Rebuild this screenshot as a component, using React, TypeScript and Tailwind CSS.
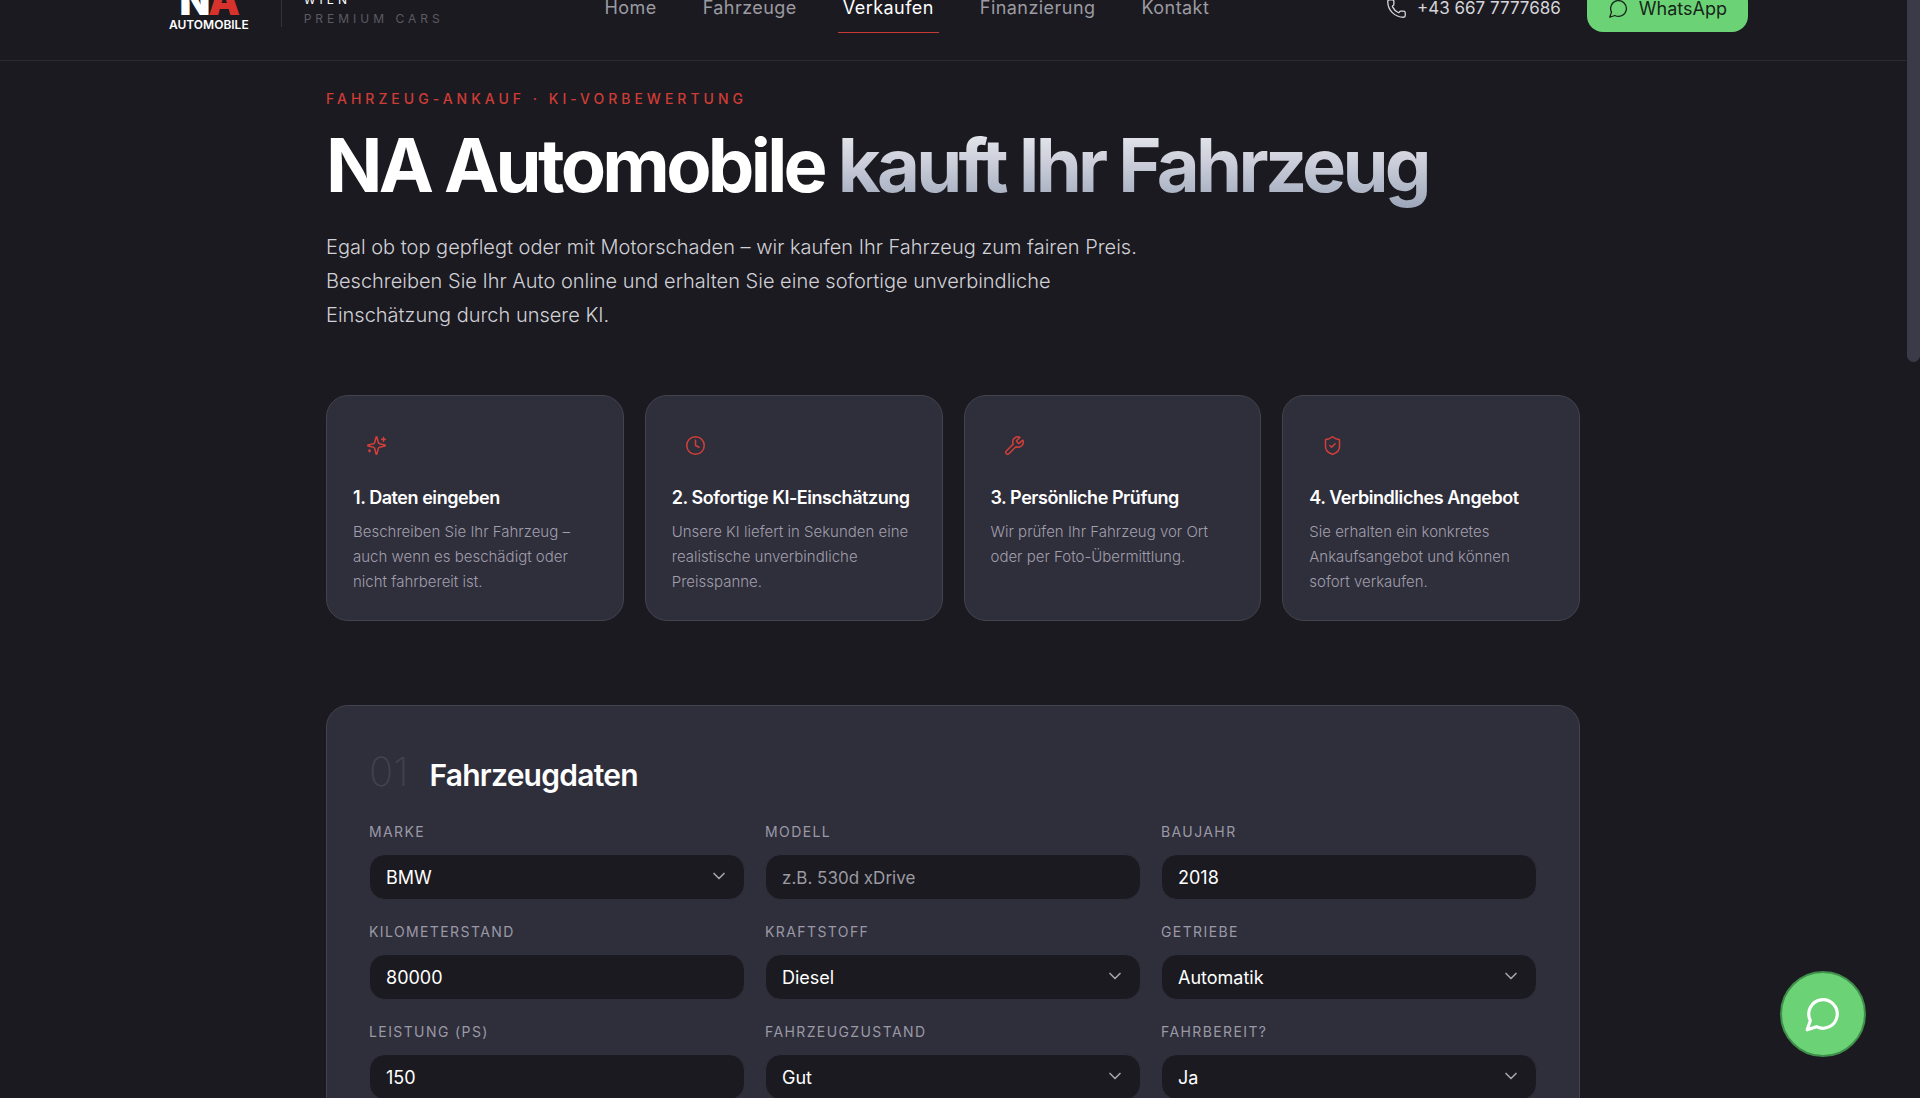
import { ChevronDown, Clock, Phone, ShieldCheck, Wrench } from "lucide-react";
import type { ReactNode } from "react";

const navLinks = ["Home", "Fahrzeuge", "Verkaufen", "Finanzierung", "Kontakt"];

const SparklesIcon = () => (
  <svg
    viewBox="0 0 24 24"
    fill="none"
    stroke="currentColor"
    strokeWidth="1.75"
    strokeLinecap="round"
    strokeLinejoin="round"
    className="size-[21px]"
    aria-hidden="true"
  >
    <path d="M9.937 15.5A2 2 0 0 0 8.5 14.063l-6.135-1.582a.5.5 0 0 1 0-.962L8.5 9.936A2 2 0 0 0 9.937 8.5l1.582-6.135a.5.5 0 0 1 .963 0L14.063 8.5A2 2 0 0 0 15.5 9.937l6.135 1.581a.5.5 0 0 1 0 .964L15.5 14.063a2 2 0 0 0-1.437 1.437l-1.582 6.135a.5.5 0 0 1-.963 0z" />
    <path d="M20 3v4M22 5h-4M4 17v2M5 18H3" />
  </svg>
);

const ChatIcon = ({ className, strokeWidth }: { className: string; strokeWidth: number }) => (
  <svg
    viewBox="0 0 24 24"
    fill="none"
    stroke="currentColor"
    strokeWidth={strokeWidth}
    strokeLinecap="round"
    strokeLinejoin="round"
    className={className}
    aria-hidden="true"
  >
    <path d="M7.9 20A9 9 0 1 0 4 16.1L2 22Z" />
  </svg>
);

const steps: { icon: ReactNode; title: string; text: string }[] = [
  {
    icon: <SparklesIcon />,
    title: "1. Daten eingeben",
    text: "Beschreiben Sie Ihr Fahrzeug – auch wenn es beschädigt oder nicht fahrbereit ist.",
  },
  {
    icon: <Clock className="size-[21px]" strokeWidth={1.75} />,
    title: "2. Sofortige KI-Einschätzung",
    text: "Unsere KI liefert in Sekunden eine realistische unverbindliche Preisspanne.",
  },
  {
    icon: <Wrench className="size-[21px]" strokeWidth={1.75} />,
    title: "3. Persönliche Prüfung",
    text: "Wir prüfen Ihr Fahrzeug vor Ort oder per Foto-Übermittlung.",
  },
  {
    icon: <ShieldCheck className="size-[21px]" strokeWidth={1.75} />,
    title: "4. Verbindliches Angebot",
    text: "Sie erhalten ein konkretes Ankaufsangebot und können sofort verkaufen.",
  },
];

type FieldProps = {
  id: string;
  label: string;
  value?: string;
  placeholder?: string;
  options?: string[];
};

const fields: FieldProps[] = [
  { id: "marke", label: "Marke", options: ["BMW", "Audi", "Mercedes-Benz", "Volkswagen"] },
  { id: "modell", label: "Modell", placeholder: "z.B. 530d xDrive" },
  { id: "baujahr", label: "Baujahr", value: "2018" },
  { id: "kilometerstand", label: "Kilometerstand", value: "80000" },
  { id: "kraftstoff", label: "Kraftstoff", options: ["Diesel", "Benzin", "Hybrid", "Elektro"] },
  { id: "getriebe", label: "Getriebe", options: ["Automatik", "Schaltgetriebe"] },
  { id: "leistung", label: "Leistung (PS)", value: "150" },
  { id: "zustand", label: "Fahrzeugzustand", options: ["Gut", "Sehr gut", "Beschädigt"] },
  { id: "fahrbereit", label: "Fahrbereit?", options: ["Ja", "Nein"] },
];

const controlClass =
  "block h-[46px] w-full appearance-none rounded-[16px] border border-[#2f2e3b] bg-[#1b1a20] px-4 text-[18px] text-white outline-none placeholder:text-[17px] placeholder:text-[#9b9ba3]";

const Field = ({ id, label, value, placeholder, options }: FieldProps) => (
  <div>
    <label
      htmlFor={id}
      className="mb-3 block text-[14px] leading-5 tracking-widest text-[#9a99a6] uppercase"
    >
      {label}
    </label>
    {options ? (
      <div className="relative">
        <select id={id} className={controlClass}>
          {options.map((option) => (
            <option key={option}>{option}</option>
          ))}
        </select>
        <ChevronDown
          className="pointer-events-none absolute top-3 right-4 size-5 text-[#a3a3ab]"
          strokeWidth={2}
        />
      </div>
    ) : (
      <input id={id} type="text" defaultValue={value} placeholder={placeholder} className={controlClass} />
    )}
  </div>
);

const Header = () => (
  <header className="-mt-[43px] border-b border-[#2b2a30]">
    <div className="mx-auto flex h-[103px] max-w-[1590px] items-center justify-between">
      <a href="#" className="flex items-center pl-[11px]">
        <div className="flex flex-col items-center text-white">
          <span className="text-[40px] leading-8 font-black tracking-tighter">
            N<span className="text-[#d8322d]">A</span>
          </span>
          <span className="text-[12px] leading-4 font-semibold">AUTOMOBILE</span>
        </div>
        <div className="mr-[22px] ml-[32px] h-9 w-px bg-[#34333a]" />
        <div className="text-[12px] leading-[19px] uppercase">
          <div className="tracking-[4px] text-white">Wien</div>
          <div className="tracking-[4px] text-[#5c5b63]">Premium Cars</div>
        </div>
      </a>
      <nav className="flex items-center gap-9">
        {navLinks.map((link) => (
          <a
            key={link}
            href="#"
            className={
              link === "Verkaufen"
                ? "border-b border-[#c93a36] px-[5px] py-3 text-[18px] leading-6 tracking-wide text-white"
                : "border-b border-transparent px-[5px] py-3 text-[18px] leading-6 tracking-wide text-[#9c9ba2]"
            }
          >
            {link}
          </a>
        ))}
      </nav>
      <div className="flex items-center gap-[26px] pl-4">
        <a href="tel:+436677777686" className="flex items-center gap-[10px] text-[17px] text-[#d5d5da]">
          <Phone className="size-[21px]" strokeWidth={1.5} />
          +43 667 7777686
        </a>
        <a
          href="#"
          className="flex h-[46px] items-center gap-[10px] rounded-[16px] bg-[#6bd375] px-[21px] text-[18px] text-[#17251a]"
        >
          <ChatIcon className="size-[21px]" strokeWidth={1.5} />
          WhatsApp
        </a>
      </div>
    </div>
  </header>
);

const App = () => {
  return (
    <div className="h-screen overflow-hidden bg-[#1b1a20] pr-[14px] font-['Inter',sans-serif]">
      <Header />
      <main className="mx-auto max-w-[1254px]">
        {/* intro */}
        <p className="mt-[28px] text-[14px] leading-5 font-medium tracking-[4px] text-[#cf3c36] uppercase">
          Fahrzeug-Ankauf · KI-Vorbewertung
        </p>
        <h1 className="mt-[13px] text-[74px] leading-[86px] font-bold tracking-tighter text-white">
          NA Automobile{" "}
          <span className="bg-gradient-to-b from-[#f1f1f4] via-[#c9ccd8] to-[#9aa5b8] bg-clip-text text-transparent">
            kauft Ihr Fahrzeug
          </span>
        </h1>
        <p className="mt-[22px] max-w-[840px] text-[20px] leading-[34px] font-light text-[#d0d0d6]">
          Egal ob top gepflegt oder mit Motorschaden – wir kaufen Ihr Fahrzeug zum fairen Preis.
          Beschreiben Sie Ihr Auto online und erhalten Sie eine sofortige unverbindliche Einschätzung
          durch unsere KI.
        </p>

        {/* steps */}
        <div className="mt-[63px] grid grid-cols-4 gap-[21px]">
          {steps.map((step) => (
            <div
              key={step.title}
              className="rounded-[22px] border border-[#43424e] bg-[#2f2e3b] px-[26px] pt-[26px] pb-[26px]"
            >
              <div className="flex size-[47px] items-center justify-center text-[#d13f39]">
                {step.icon}
              </div>
              <h3 className="mt-[17px] text-[18px] leading-6 font-semibold tracking-tight whitespace-nowrap text-white">
                {step.title}
              </h3>
              <p className="mt-[9px] text-[15px] leading-[25px] font-light text-[#a09fac]">{step.text}</p>
            </div>
          ))}
        </div>

        {/* form */}
        <form className="mt-[84px] rounded-[22px] border border-[#43424e] bg-[#2f2e3b] px-[42px] pt-[41px] pb-12">
          <div className="flex items-baseline gap-[21px]">
            <span className="text-[40px] leading-[50px] font-extralight text-[#42414d]">01</span>
            <h2 className="text-[30px] leading-[50px] font-semibold tracking-tight text-white">Fahrzeugdaten</h2>
          </div>
          <div className="mt-[22px] grid grid-cols-3 gap-x-[20px] gap-y-[22px]">
            {fields.map((field) => (
              <Field key={field.id} {...field} />
            ))}
          </div>
        </form>
      </main>

      <button
        type="button"
        aria-label="WhatsApp Chat"
        className="fixed right-[54px] bottom-[41px] flex size-[86px] items-center justify-center rounded-full border-2 border-[#3f8f4b] bg-[#6bd375] text-white"
      >
        <ChatIcon className="size-[38px]" strokeWidth={2} />
      </button>
      {/* scroll thumb */}
      <div className="fixed top-0 right-0 h-[362px] w-[13px] rounded-b-full bg-[#3b3a49]" />
    </div>
  );
};

export default App;
